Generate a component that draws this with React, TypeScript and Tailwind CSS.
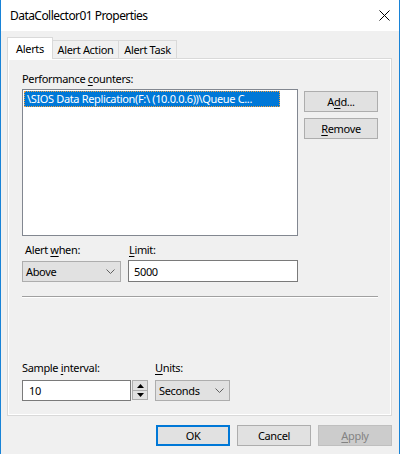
function Mn({ children }: { children: React.ReactNode }) {
  return <span className="underline underline-offset-[2px] decoration-1">{children}</span>;
}

function Combo({ value, w }: { value: string; w: string }) {
  return (
    <div className={`${w} h-[21px] flex items-center justify-between border border-[#adadad] bg-[#e1e1e1] pl-[3px] pr-[5px]`}>
      <span>{value}</span>
      <svg width="9" height="6" viewBox="0 0 9 6" className="mt-px">
        <polyline points="0.5,0.5 4.5,4.5 8.5,0.5" fill="none" stroke="#606060" strokeWidth="1" />
      </svg>
    </div>
  );
}

function Btn({ children, kind = 'normal' }: { children: React.ReactNode; kind?: 'normal' | 'default' | 'disabled' }) {
  const cls =
    kind === 'default'
      ? 'border-2 border-[#0078d7] bg-[#e1e1e1] text-black'
      : kind === 'disabled'
      ? 'border border-[#bfbfbf] bg-[#cccccc] text-[#838383]'
      : 'border border-[#adadad] bg-[#e1e1e1] text-black';
  return <div className={`w-[74px] h-[21px] flex items-center justify-center ${cls}`}>{children}</div>;
}

export default function App() {
  return (
    <div className="w-[400px] h-[454px] bg-[#f0f0f0] border-x border-[#1883d7] flex flex-col font-['Noto_Sans',sans-serif] text-[11px] leading-[15px] tracking-[-0.35px] text-black">
      {/* title bar */}
      <div className="h-[31px] bg-white flex items-center justify-between pl-[9px] pr-[9px] shrink-0">
        <span className="text-[12px] tracking-[-0.55px]">DataCollector01 Properties</span>
        <svg width="11" height="11" viewBox="0 0 11 11">
          <path d="M0.5 0.5 L10.5 10.5 M10.5 0.5 L0.5 10.5" stroke="#000" strokeWidth="1" />
        </svg>
      </div>

      <div className="pt-[6px] pl-[6px] flex flex-col">
        {/* tabs */}
        <div className="flex items-end h-[21px]">
          <div className="relative z-10 w-[46px] h-[22px] -mb-px bg-white border border-b-0 border-[#d9d9d9] flex items-start justify-center pt-[3px]">
            Alerts
          </div>
          <div className="-ml-px w-[67px] h-[18px] border border-b-0 border-[#d9d9d9] flex items-center justify-center">
            Alert Action
          </div>
          <div className="-ml-px w-[59px] h-[18px] border border-b-0 border-[#d9d9d9] flex items-center justify-center">
            Alert Task
          </div>
        </div>

        {/* tab page */}
        <div className="w-[385px] h-[358px] border border-[#d9d9d9] shadow-[inset_1px_1px_0_#ffffff,inset_-1px_-1px_0_#ffffff] pl-[14px] pt-[12px] flex flex-col">
          <div>
            Performance <Mn>c</Mn>ounters:
          </div>
          <div className="mt-[3px] flex gap-[6px]">
            <div className="w-[276px] h-[147px] border border-[#828790] bg-white p-px">
              <div className="w-[256px] h-[16px] bg-[#0078d7] text-white outline outline-1 outline-dotted outline-[#f2a040] -outline-offset-1 pl-[3px] pr-[2px] whitespace-nowrap overflow-hidden">
                \SIOS Data Replication(F:\ (10.0.0.6))\Queue C...
              </div>
            </div>
            <div className="pt-[2px] flex flex-col gap-[6px]">
              <Btn>
                A<Mn>d</Mn>d...
              </Btn>
              <Btn>
                <Mn>R</Mn>emove
              </Btn>
            </div>
          </div>

          <div className="mt-[6px] flex gap-[7px]">
            <div className="flex flex-col">
              <div className="pl-[3px]">
                Alert <Mn>w</Mn>hen:
              </div>
              <div className="mt-[4px]">
                <Combo value="Above" w="w-[99px]" />
              </div>
            </div>
            <div className="flex flex-col">
              <div className="pl-px">
                <Mn>L</Mn>imit:
              </div>
              <div className="mt-[3px] w-[170px] h-[22px] border border-[#7a7a7a] bg-white flex items-center pl-[5px]">5000</div>
            </div>
          </div>

          <div className="mt-[14px] w-[356px] border-t border-[#a0a0a0] border-b border-b-white" />

          <div className="mt-[62px] flex gap-[7px]">
            <div className="flex flex-col">
              <div>
                Sample <Mn>i</Mn>nterval:
              </div>
              <div className="mt-[5px] flex gap-px">
                <div className="w-[109px] h-[21px] border border-[#7a7a7a] bg-white flex items-center pl-[6px]">10</div>
                <div className="w-[16px] h-[21px] flex flex-col">
                  <div className="h-[11px] border border-[#adadad] bg-[#e1e1e1] flex items-center justify-center">
                    <svg width="7" height="4" viewBox="0 0 7 4">
                      <polygon points="3.5,0 7,4 0,4" fill="#000" />
                    </svg>
                  </div>
                  <div className="h-[10px] -mt-px border border-[#adadad] bg-[#e1e1e1] flex items-center justify-center">
                    <svg width="7" height="4" viewBox="0 0 7 4">
                      <polygon points="0,0 7,0 3.5,4" fill="#000" />
                    </svg>
                  </div>
                </div>
              </div>
            </div>
            <div className="flex flex-col">
              <div>
                <Mn>U</Mn>nits:
              </div>
              <div className="mt-[5px]">
                <Combo value="Seconds" w="w-[75px]" />
              </div>
            </div>
          </div>
        </div>

        {/* dialog buttons */}
        <div className="mt-[9px] pr-[7px] flex justify-end gap-[7px]">
          <Btn kind="default">OK</Btn>
          <Btn>Cancel</Btn>
          <Btn kind="disabled">
            <Mn>A</Mn>pply
          </Btn>
        </div>
      </div>
    </div>
  );
}
